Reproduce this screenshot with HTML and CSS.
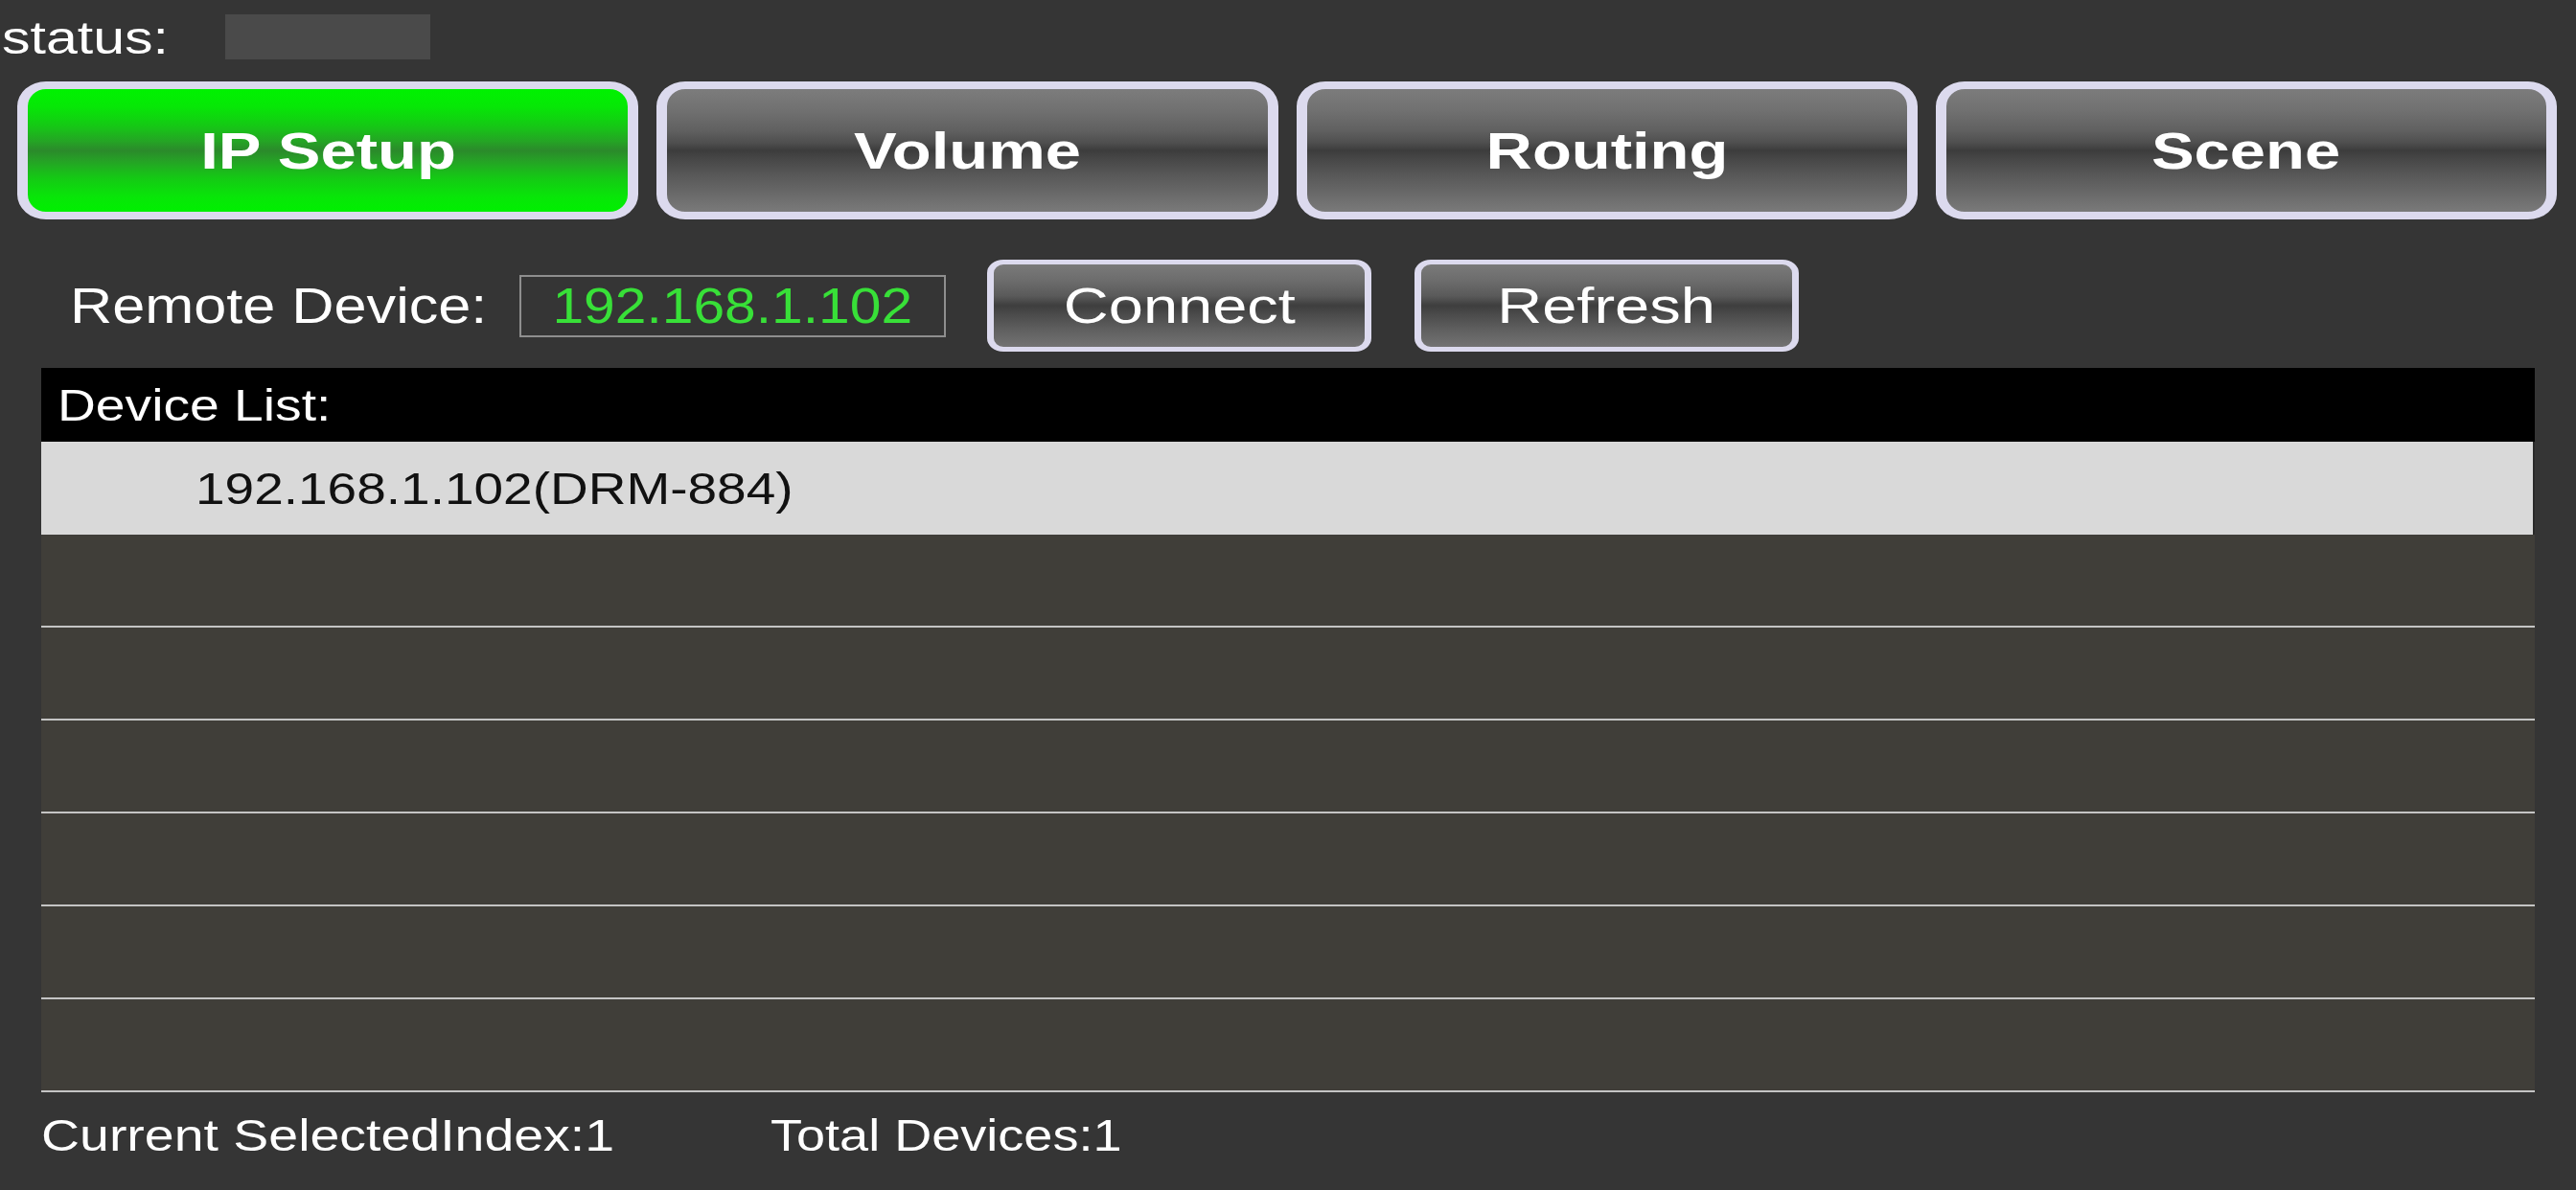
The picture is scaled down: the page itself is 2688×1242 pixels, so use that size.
FILE: index.html
```html
<!DOCTYPE html>
<html>
<head>
<meta charset="utf-8">
<title>IP Setup</title>
<link rel="stylesheet" href="styles.css">
</head>
<body>
<div class="app">
  <div class="status-row">
    <span class="status-label"><span class="sx sx-status">status:</span></span>
    <div class="status-box"></div>
  </div>

  <div class="tabs">
    <button class="tab tab-active"><span class="sx sx-tab">IP Setup</span></button>
    <button class="tab"><span class="sx sx-tab">Volume</span></button>
    <button class="tab"><span class="sx sx-tab">Routing</span></button>
    <button class="tab"><span class="sx sx-tab">Scene</span></button>
  </div>

  <div class="remote-row">
    <div class="remote-label"><span class="sx sx-remote">Remote Device:</span></div>
    <div class="ip-box"><span class="sx sx-ip">192.168.1.102</span></div>
    <button class="small-btn btn-connect"><span class="sx sx-small">Connect</span></button>
    <button class="small-btn btn-refresh"><span class="sx sx-small">Refresh</span></button>
  </div>

  <div class="device-list">
    <div class="list-header"><span class="sx sx-header">Device List:</span></div>
    <div class="list-row row-selected"><span class="sx sx-row">192.168.1.102(DRM-884)</span></div>
    <div class="list-row"></div>
    <div class="list-row"></div>
    <div class="list-row"></div>
    <div class="list-row"></div>
    <div class="list-row"></div>
    <div class="list-row"></div>
  </div>

  <div class="footer">
    <div class="footer-left"><span class="sx sx-foot1">Current SelectedIndex:1</span></div>
    <div class="footer-right"><span class="sx sx-foot2">Total Devices:1</span></div>
  </div>
</div>
</body>
</html>
```

FILE: styles.css
```css
* {
  box-sizing: border-box;
}

html, body {
  margin: 0;
  padding: 0;
  background: #353535;
}

body {
  width: 2688px;
  height: 1242px;
  overflow: hidden;
  font-family: "Liberation Sans", Arial, Helvetica, sans-serif;
  color: #ffffff;
}

.app {
  display: flex;
  flex-direction: column;
  width: 2688px;
  height: 1242px;
}

/* stretched text, the screen is wider than it was designed for */
.sx {
  display: inline-block;
  white-space: nowrap;
  transform-origin: left center;
}

/* status row */
.status-row {
  display: flex;
  align-items: flex-start;
  height: 62px;
}

.status-label {
  width: 235px;
  padding-left: 2px;
  margin-top: 16px;
  font-size: 48px;
  line-height: 48px;
}

.sx-status {
  transform: scaleX(1.23);
}

.status-box {
  margin-top: 15px;
  width: 214px;
  height: 47px;
  background: #4a4a4a;
}

/* tabs */
.tabs {
  display: flex;
  gap: 19px;
  margin-top: 23px;
  padding: 0 20px 0 18px;
  height: 144px;
}

.tab {
  flex: 1;
  display: flex;
  align-items: center;
  justify-content: center;
  margin: 0;
  padding: 0;
  border-style: solid;
  border-color: #dcdaee;
  border-width: 8px 11px;
  border-radius: 30px / 26px;
  background: linear-gradient(to bottom,
    #7c7c7c 0%,
    #707070 18%,
    #606060 34%,
    #4e4e4e 44%,
    #3c3c3c 50%,
    #474747 57%,
    #585858 70%,
    #6a6a6a 86%,
    #7a7a7a 100%);
  color: #ffffff;
  font-family: "Liberation Sans", Arial, Helvetica, sans-serif;
  font-weight: bold;
  font-size: 54px;
  line-height: 54px;
}

.tab-active {
  background: linear-gradient(to bottom,
    #00f200 0%,
    #06e806 14%,
    #15c815 30%,
    #25a325 43%,
    #2b8a2b 50%,
    #26a026 58%,
    #15c815 72%,
    #08e608 88%,
    #00f000 100%);
}

.sx-tab {
  transform-origin: center center;
  transform: scaleX(1.24);
}

/* remote device row */
.remote-row {
  display: flex;
  align-items: center;
  margin-top: 42px;
  height: 96px;
  padding-left: 73px;
}

.remote-label {
  width: 469px;
  font-size: 51px;
  line-height: 51px;
}

.sx-remote {
  transform: scaleX(1.2);
}

.ip-box {
  display: flex;
  align-items: center;
  justify-content: center;
  width: 445px;
  height: 65px;
  border: 2px solid #8e8e8e;
  color: #38e038;
  font-size: 52px;
  line-height: 52px;
}

.sx-ip {
  transform-origin: center center;
  transform: scaleX(1.13);
}

.small-btn {
  display: flex;
  align-items: center;
  justify-content: center;
  width: 401px;
  height: 96px;
  margin: 0;
  padding: 0;
  border-style: solid;
  border-color: #dcdaee;
  border-width: 5px 7px;
  border-radius: 17px / 14px;
  background: linear-gradient(to bottom,
    #7a7a7a 0%,
    #6c6c6c 20%,
    #5a5a5a 38%,
    #3e3e3e 50%,
    #4a4a4a 60%,
    #5e5e5e 78%,
    #737373 100%);
  color: #ffffff;
  font-family: "Liberation Sans", Arial, Helvetica, sans-serif;
  font-size: 52px;
  line-height: 52px;
}

.btn-connect {
  margin-left: 43px;
}

.btn-refresh {
  margin-left: 45px;
}

.sx-small {
  transform-origin: center center;
  transform: scaleX(1.25);
}

/* device list */
.device-list {
  display: flex;
  flex-direction: column;
  margin-top: 17px;
  margin-left: 43px;
  width: 2602px;
}

.list-header {
  display: flex;
  align-items: center;
  height: 77px;
  padding-left: 17px;
  background: #000000;
  font-size: 46px;
  line-height: 46px;
}

.sx-header {
  transform: scaleX(1.2);
}

.list-row {
  display: flex;
  align-items: center;
  height: 97px;
  background: #403e39;
  border-bottom: 2px solid #c4c4c4;
}

.row-selected {
  background: #d9d9d9;
  border-bottom: none;
  border-right: 2px solid #2a2a2a;
  padding-left: 161px;
  color: #111111;
  font-size: 47px;
  line-height: 47px;
}

.sx-row {
  transform: scaleX(1.17);
}

/* footer */
.footer {
  display: flex;
  margin-top: 21px;
  padding-left: 43px;
  font-size: 47px;
  line-height: 47px;
}

.footer-left {
  width: 761px;
}

.sx-foot1 {
  transform: scaleX(1.18);
}

.sx-foot2 {
  transform: scaleX(1.15);
}
```
